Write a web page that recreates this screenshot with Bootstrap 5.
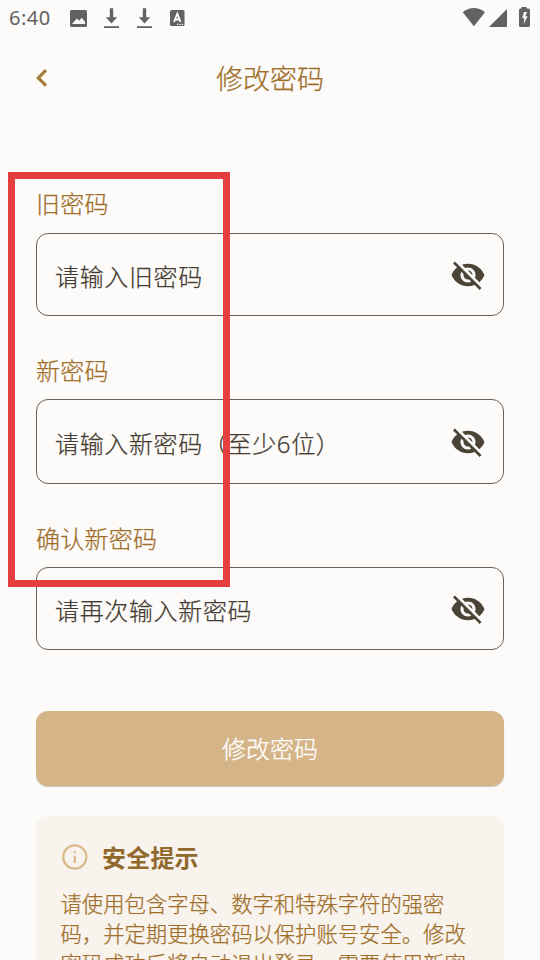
<!DOCTYPE html>
<html lang="zh-CN">
<head>
<meta charset="utf-8">
<meta name="viewport" content="width=device-width, initial-scale=1">
<title>修改密码</title>
<link href="https://cdn.jsdelivr.net/npm/bootstrap@5.3.0/dist/css/bootstrap.min.css" rel="stylesheet">
<style>
  body { background: #fcfbf9; font-family: "Noto Sans CJK SC", sans-serif; font-weight: 300; color: #9f6f2a; height: 960px; -webkit-text-stroke: .25px currentColor; }
  .status-bar { height: 36px; padding: 0 9px; color: #626262; }
  .clock { font: 400 20px/38px "Noto Sans", sans-serif; letter-spacing: .5px; width: 60px; -webkit-text-stroke: 0; }
  .app-bar { height: 86px; }
  .app-title { font-size: 27px; font-weight: 300; line-height: 40px; margin-top: -2px; }
  .back { left: 27px; top: 27px; width: 30px; height: 30px; color: #a67c3a; }
  .page-form { padding: 63px 36px 0; }
  .field-label { font-size: 24px; line-height: 36px; height: 48px; letter-spacing: .25px; }
  .field + .field-label { line-height: 38px; }
  .field { height: 83px; border: 1px solid #6b5f52; border-radius: 12px; margin-bottom: 35px; padding: 0 17px 0 18px; }
  .field-mid { height: 85px; }
  .field .form-control { font-family: "Noto Sans", "Noto Sans CJK SC", sans-serif; font-size: 24px; font-weight: 300; letter-spacing: .65px; line-height: 36px; height: 50px; }
  .field .form-control::placeholder { color: #453b32; opacity: 1; }
  .toggle { color: #4b4436; width: 36px; height: 36px; }
  .submit { height: 75px; margin-top: 61px; padding-bottom: 8px; border-radius: 12px; background: #d5b587; color: #fff; font-size: 24px; font-weight: 300; box-shadow: 0 1px 1px rgba(80,70,60,.3); }
  .submit:hover { background: #d5b587; color: #fff; }
  .tips { margin-top: 30px; height: 144px; border-radius: 12px 12px 0 0; background: #f8f3ec; padding: 23px 25px 0 24.5px; }
  .tips-title { font-size: 24px; font-weight: 700; line-height: 36px; letter-spacing: .2px; color: #92692d; -webkit-text-stroke: 0; }
  .tips-text { font-size: 21.33px; line-height: 30px; margin-top: 12.500px; white-space: nowrap; }
  .info { margin-right: 14.5px; }
  .highlight { left: 8px; top: 172px; width: 222px; height: 415px; border: 7px solid #e43e3f; pointer-events: none; }
</style>
</head>
<body class="position-relative overflow-hidden">
<header>
  <div class="status-bar d-flex align-items-center justify-content-between">
    <div class="d-flex align-items-center">
      <span class="clock">6:40</span>
      <svg width="120" height="36" viewBox="69 0 120 36" fill="currentColor">
        <path fill-rule="evenodd" d="M71.500 10h14q1.500 0 1.500 1.500v14q0 1.500-1.500 1.500h-14q-1.500 0-1.500-1.500v-14q0-1.500 1.500-1.500zM72 24h13v-2l-3.300-4.300-2.400 3-2.300-2.100z"/>
        <path d="M109.800 8.300h3.400v9h4l-5.700 6.200-5.700-6.200h4zM104 26.300h15v1.800h-15z"/>
        <path d="M142.800 8.300h3.400v9h4l-5.700 6.200-5.700-6.200h4zM137 26.300h15v1.800h-15z"/>
        <rect x="170" y="10" width="14.500" height="16" rx="1.500"/>
        <path d="M174 22l3.300-8.300 3.300 8.300M175.300 19.500h4" fill="none" stroke="#fff" stroke-width="1.800"/>
        <path d="M177 24.300h7" stroke="#fff" stroke-width="1" stroke-dasharray="1.500 .8"/>
      </svg>
    </div>
    <svg width="72" height="36" viewBox="459 0 72 36" fill="currentColor">
      <path d="M462.800 12.200q11-8.400 22.200 0L473.900 26.300z"/>
      <path d="M507 9v18h-18z"/>
      <path fill-rule="evenodd" d="M521.500 7h5v1.500h2q1.500 0 1.500 1.500v15.500q0 1.500-1.500 1.500h-8q-1.500 0-1.500-1.500v-15.500q0-1.500 1.500-1.500h1zM524 12l-1.800 6.200h2.200l-.8 6 4-8h-2.400l1.800-4.200z"/>
    </svg>
  </div>
  <div class="app-bar position-relative d-flex justify-content-center align-items-center">
    <button type="button" class="back btn p-0 border-0 position-absolute d-flex" aria-label="返回">
      <svg width="30" height="30" viewBox="27 63 30 30" fill="none" stroke="currentColor" stroke-width="3.200"><path d="M46 70.200l-7.700 7.700 7.700 7.700"/></svg>
    </button>
    <h1 class="app-title mb-0">修改密码</h1>
  </div>
</header>

<svg class="d-none">
  <symbol id="eye-off" viewBox="0 0 24 24"><path d="M12 7c2.760 0 5 2.240 5 5 0 .65-.13 1.260-.36 1.830l2.920 2.920c1.510-1.260 2.700-2.890 3.430-4.750-1.730-4.390-6-7.500-11-7.500-1.400 0-2.740.25-3.980.7l2.160 2.160C10.740 7.130 11.350 7 12 7zM2 4.270l2.280 2.280.46.46C3.080 8.300 1.780 10.020 1 12c1.730 4.390 6 7.500 11 7.500 1.550 0 3.030-.3 4.380-.84l.42.42L19.730 22 21 20.730 3.270 3 2 4.270zM7.530 9.800l1.550 1.550c-.05.21-.08.43-.08.65 0 1.660 1.340 3 3 3 .22 0 .44-.03.65-.08l1.550 1.550c-.67.33-1.410.53-2.200.53-2.760 0-5-2.240-5-5 0-.79.2-1.530.53-2.200zm4.310-.78l3.150 3.150.02-.16c0-1.660-1.340-3-3-3l-.17.01z" fill="currentColor"/></symbol>
</svg>

<form class="page-form">
  <label class="field-label d-block" for="old">旧密码</label>
  <div class="field d-flex align-items-center">
    <input id="old" type="text" class="form-control bg-transparent border-0 shadow-none px-0 pb-0 pt-1" placeholder="请输入旧密码">
    <button type="button" class="toggle btn p-0 border-0 d-flex flex-shrink-0" aria-label="显示密码"><svg width="36" height="36"><use href="#eye-off"/></svg></button>
  </div>
  <label class="field-label d-block" for="new">新密码</label>
  <div class="field field-mid d-flex align-items-center">
    <input id="new" type="text" class="form-control bg-transparent border-0 shadow-none px-0 pb-0 pt-1" placeholder="请输入新密码（至少6位）">
    <button type="button" class="toggle btn p-0 border-0 d-flex flex-shrink-0" aria-label="显示密码"><svg width="36" height="36"><use href="#eye-off"/></svg></button>
  </div>
  <label class="field-label d-block" for="again">确认新密码</label>
  <div class="field d-flex align-items-center mb-0">
    <input id="again" type="text" class="form-control bg-transparent border-0 shadow-none px-0 pb-0 pt-1" placeholder="请再次输入新密码">
    <button type="button" class="toggle btn p-0 border-0 d-flex flex-shrink-0" aria-label="显示密码"><svg width="36" height="36"><use href="#eye-off"/></svg></button>
  </div>
  <button type="button" class="submit btn border-0 w-100 d-flex align-items-center justify-content-center">修改密码</button>
  <section class="tips overflow-hidden">
    <div class="d-flex align-items-center">
      <svg class="info" width="27" height="36" viewBox="0 0 27 36" fill="none" stroke="#dab98b" stroke-width="2.200"><circle cx="13.800" cy="18" r="11.600"/><path d="M13.800 16.800v7.200M13.800 12v2.300"/></svg>
      <h2 class="tips-title mb-0">安全提示</h2>
    </div>
    <p class="tips-text mb-0">请使用包含字母、数字和特殊字符的强密<br>码，并定期更换密码以保护账号安全。修改<br>密码成功后将自动退出登录，需要使用新密</p>
  </section>
</form>
<div class="highlight position-absolute"></div>
<script src="https://cdn.jsdelivr.net/npm/bootstrap@5.3.0/dist/js/bootstrap.bundle.min.js"></script>
</body>
</html>
